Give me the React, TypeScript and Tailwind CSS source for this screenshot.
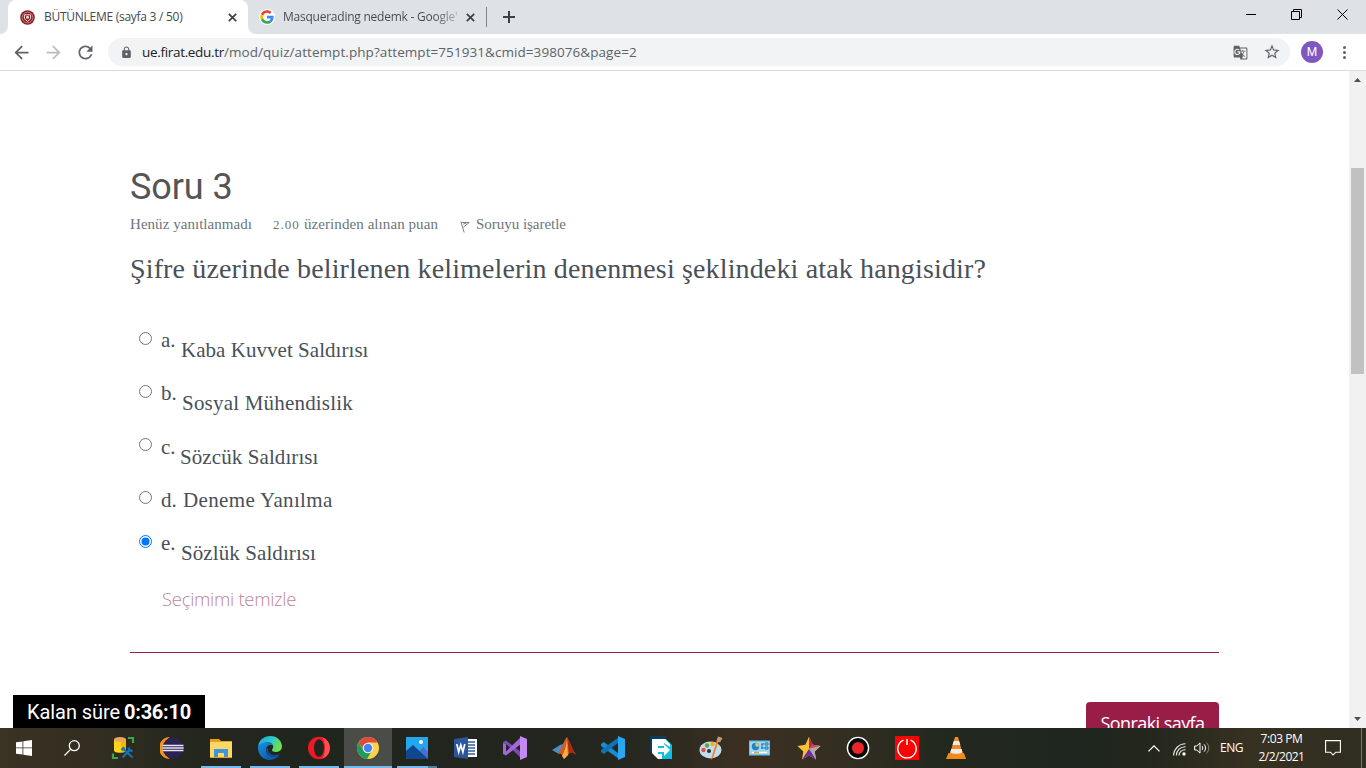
import React from "react";
import { MdArrowBack, MdArrowForward, MdRefresh, MdLock, MdGTranslate, MdStarBorder } from "react-icons/md";

const options = [
  { letter: "a.", text: "Kaba Kuvvet Saldırısı", row: "h-[53px]", letterBox: "w-[20px]", textBox: "pt-[10px] tracking-[0.04px]" },
  { letter: "b.", text: "Sosyal Mühendislik", row: "h-[53px]", letterBox: "w-[21px]", textBox: "pt-[10px] tracking-[0.198px]" },
  { letter: "c.", text: "Sözcük Saldırısı", row: "h-[53px]", letterBox: "w-[19px] pt-px", textBox: "pt-[11px] tracking-[0.09px]" },
  { letter: "d.", text: "Deneme Yanılma", row: "h-[44px]", letterBox: "w-[22px] pt-px", textBox: "pt-px tracking-[0.36px]" },
  { letter: "e.", text: "Sözlük Saldırısı", row: "h-[56px]", letterBox: "w-[20px]", textBox: "pt-[10px] tracking-[0.088px]", checked: true },
];

function Radio({ checked }: { checked?: boolean }) {
  return (
    <svg className="mt-1 ml-[9px] size-[13px] shrink-0" viewBox="0 0 13 13">
      <circle cx="6.5" cy="6.5" r="6" fill="#fff" stroke={checked ? "#0075ff" : "#767676"} />
      {checked && <circle cx="6.5" cy="6.5" r="4" fill="#0075ff" />}
    </svg>
  );
}

function CloseX() {
  return (
    <svg className="size-[9px] shrink-0" viewBox="0 0 9 9" stroke="#3c4043" strokeWidth="1.7">
      <path d="M.8.8l7.4 7.4M8.2.8L.8 8.2" />
    </svg>
  );
}

function UniversityIcon() {
  return (
    <svg className="size-[15px] shrink-0" viewBox="0 0 15 15" fill="none">
      <circle cx="7.5" cy="7.5" r="7.3" fill="#8c1d22" />
      <circle cx="7.5" cy="7.5" r="5.4" stroke="#d09a9a" strokeWidth=".8" />
      <path d="M4.400 4.800h6.200v4l-3.100 2.600-3.100-2.600z" stroke="#f0dcdc" />
      <circle cx="7.500" cy="7.300" r="1.500" fill="#f0dcdc" />
    </svg>
  );
}

function GoogleIcon() {
  return (
    <svg className="size-4 shrink-0" viewBox="0 0 48 48">
      <circle cx="24" cy="24" r="24" fill="#fff" />
      <g transform="translate(3.5 3.5) scale(.855)">
        <path fill="#EA4335" d="M24 9.5c3.5 0 6.7 1.2 9.2 3.6l6.8-6.8C35.9 2.400 30.500 0 24 0 14.600 0 6.500 5.400 2.600 13.200l8 6.200C12.400 13.700 17.700 9.500 24 9.500z" />
        <path fill="#4285F4" d="M47 24.500c0-1.600-.2-3.100-.4-4.500H24v9h12.900c-.6 3-2.300 5.500-4.800 7.200l7.700 6C44.400 38 47 31.800 47 24.500z" />
        <path fill="#FBBC05" d="M10.500 28.600c-.5-1.500-.8-3-.8-4.600s.3-3.100.8-4.600l-8-6.200C.9 16.500 0 20.100 0 24s.9 7.500 2.600 10.800z" />
        <path fill="#34A853" d="M24 48c6.500 0 11.900-2.100 15.900-5.800l-7.700-6c-2.200 1.500-4.900 2.300-8.200 2.300-6.300 0-11.600-4.200-13.500-9.900l-8 6.200C6.500 42.600 14.600 48 24 48z" />
      </g>
    </svg>
  );
}

function BrowserChrome() {
  return (
    <header className="h-[71px] font-['Open_Sans','Noto_Sans',sans-serif]">
      <div className="flex h-[34px] bg-[#dee1e6]">
        <div className="flex h-full w-2 items-end bg-white">
          <div className="h-full w-full rounded-br-lg bg-[#dee1e6]" />
        </div>
        <div className="flex w-[240px] items-center rounded-t-lg bg-white pl-3 pr-[11px]">
          <UniversityIcon />
          <span className="ml-[9px] flex-1 whitespace-nowrap text-[12px] tracking-[-0.268px] text-[#45494d]">BÜTÜNLEME (sayfa 3 / 50)</span>
          <CloseX />
        </div>
        <div className="w-2 bg-white">
          <div className="h-full rounded-bl-lg bg-[#dee1e6]" />
        </div>
        <div className="my-[7px] flex w-[231px] items-center border-r border-[#808387] pl-[3px] pr-[11px]">
          <GoogleIcon />
          <span className="ml-2 w-[176px] whitespace-nowrap bg-[linear-gradient(90deg,#45494d_150px,rgba(69,73,77,0.3)_174px)] bg-clip-text text-[12px] tracking-[-0.239px] text-transparent">Masquerading nedemk - Google'</span>
          <span className="ml-auto flex"><CloseX /></span>
        </div>
        <svg className="mt-[11px] ml-4 size-3" viewBox="0 0 12 12" stroke="#3c4043" strokeWidth="2"><path d="M6 0v12M0 6h12" /></svg>
        <div className="mr-[18px] ml-auto flex pt-[9px]">
          <svg className="h-[11px] w-[103px]" viewBox="0 0 103 11" fill="none" stroke="#000">
            <path d="M1 5.500h10M46.500 2.500h8v8h-8zM48.500 2.500v-2h8v8h-2" />
            <path d="M92.500.5l10 10M102.500.5l-10 10" />
          </svg>
        </div>
      </div>
      <div className="flex h-[37px] items-center border-b border-[#dadce0] bg-white pl-[11px] text-[#5f6368]">
        <MdArrowBack size={21} />
        <MdArrowForward size={21} className="ml-[11px] text-[#bbbdbf]" />
        <MdRefresh size={21} className="ml-[11px]" />
        <div className="ml-3 flex h-7 w-[1182px] items-center rounded-full bg-[#f1f3f4] pl-3">
          <MdLock size={13} />
          <span className="ml-[9px] flex items-center whitespace-nowrap text-[13.5px]">
            <span className="tracking-[-0.32px] text-[#202124]">ue.firat.edu.tr</span>
            <span className="tracking-[0.065px]">/mod/quiz/attempt.php?attempt=751931&amp;cmid=398076&amp;page=2</span>
          </span>
          <MdGTranslate size={15} className="ml-auto" />
          <MdStarBorder size={18} className="mr-[9px] ml-[15px]" />
        </div>
        <div className="ml-[11px] flex size-[22px] items-center justify-center rounded-full bg-[#7e57c2] font-[Roboto] text-[12px] text-white">M</div>
        <svg className="ml-5 h-[13px] w-[3px]" viewBox="0 0 3 13" fill="#5f6368"><circle cx="1.500" cy="1.500" r="1.500" /><circle cx="1.500" cy="6.500" r="1.500" /><circle cx="1.500" cy="11.500" r="1.500" /></svg>
      </div>
    </header>
  );
}

function Quiz() {
  return (
    <main className="flex flex-1 flex-col px-[130px] pt-[94px] font-['Liberation_Serif',serif] text-[#495057]">
      <h1 className="font-[Roboto] text-[36px] leading-[44px] tracking-[-0.1px] text-[#555]">Soru 3</h1>
      <div className="mt-[5px] flex h-5 items-center whitespace-nowrap text-[15px] leading-5 text-[#6c757d]">
        <span className="w-[143px] tracking-[0.043px]">Henüz yanıtlanmadı</span>
        <span className="flex w-[187px] items-baseline">
          <span className="w-[31px] text-[13px] tracking-[1px]">2.00</span>
          <span className="tracking-[0.074px]">üzerinden alınan puan</span>
        </span>
        <svg className="mt-[5px] mr-[6px] h-3 w-[10px]" viewBox="0 0 10 12" fill="none" stroke="#6c757d" strokeWidth=".9">
          <path d="M.8.600L4.200 11.500M1.200 1.500h8L3.300 6.200M3.200 3.200l4-1.700" />
        </svg>
        <span className="tracking-[-0.027px]">Soruyu işaretle</span>
      </div>
      <p className="mt-[17px] h-9 whitespace-nowrap text-[28px] leading-9 tracking-[0.145px]">
        Şifre üzerinde belirlenen kelimelerin denenmesi şeklindeki atak hangisidir?
      </p>
      <div className="mt-[41px] whitespace-nowrap text-[21px] leading-6">
        {options.map((o) => (
          <div key={o.letter} className={`flex items-start ${o.row}`}>
            <Radio checked={o.checked} />
            <span className={`ml-[9px] shrink-0 ${o.letterBox}`}>{o.letter}</span>
            <span className={o.textBox}>{o.text}</span>
          </div>
        ))}
      </div>
      <a className="ml-8 h-6 whitespace-nowrap font-['Open_Sans','Noto_Sans',sans-serif] text-[18.5px] leading-6 font-light tracking-[-0.3px] text-[#bd8598]">Seçimimi temizle</a>
      <div className="mt-[41px] h-px shrink-0 bg-[#9b1c46]" />
      <div className="mt-[49px] flex h-[26px] justify-end overflow-hidden">
        <button className="h-[42px] w-[133px] whitespace-nowrap rounded-[4px] bg-[#981d47] font-['Open_Sans','Noto_Sans',sans-serif] text-[18px] leading-[42px] tracking-[-0.57px] text-white">Sonraki sayfa</button>
      </div>
    </main>
  );
}

function ScrollBar() {
  return (
    <div className="flex w-[17px] flex-col items-center bg-[#f1f1f1]">
      <svg className="mt-[7px] h-1 w-[7px]" viewBox="0 0 7 4" fill="#505050"><path d="M0 4L3.500 0L7 4z" /></svg>
      <div className="mt-[86px] mr-px h-[206px] w-[13px] bg-[#c1c1c1]" />
      <svg className="mt-auto mb-[7px] h-1 w-[7px]" viewBox="0 0 7 4" fill="#505050"><path d="M0 0h7L3.500 4z" /></svg>
    </div>
  );
}

const icons: React.ReactNode[] = [
  <>
    <path d="M3 3.500v11c0 3 12 3 12 0v-11z" fill="#ffd51c" />
    <path d="M10 4h5v12h-5z" fill="#f3b900" />
    <ellipse cx="9" cy="3.500" rx="6" ry="2.500" fill="#e9a561" />
    <path d="M17 2h5v5M2 17.500V22h5" stroke="#41a34a" strokeWidth="2.200" fill="none" />
    <path d="M11.500 21.500L19 13.500M13 13.500l8.500 8M10.500 14l3-2.500M17.500 11.500l1 3 3 .5" stroke="#1173b8" strokeWidth="2.300" fill="none" />
  </>,
  <>
    <path d="M10 1a11 11 0 0 0 0 22A13 13 0 0 1 10 1z" fill="#f7941e" />
    <circle cx="13" cy="12" r="10.500" fill="#2c2255" />
    <path d="M2.500 9.500h21M2.300 12h21.400M2.500 14.500h21" stroke="#e8e6f2" strokeWidth="1.500" />
  </>,
  <>
    <path d="M1 3h9l2 2h11v17H1z" fill="#e7a118" />
    <path d="M1 6h22v15H1z" fill="#ffd766" />
    <path d="M5 21v-8h14v8h-4v-4H9v4z" fill="#3b96dd" />
  </>,
  <>
    <defs>
      <linearGradient id="edgeTop" x2="1" y2=".4"><stop stopColor="#1ba6df" /><stop offset=".55" stopColor="#2cc7d0" /><stop offset="1" stopColor="#6ee04c" /></linearGradient>
      <linearGradient id="edgeLow" x2=".8" y2="1"><stop stopColor="#1b8fe0" /><stop offset="1" stopColor="#0b54a8" /></linearGradient>
    </defs>
    <path d="M0 12C0 4 6 0 12.500 0 19 0 24 5 24 10.500c0 4-3.500 5.500-6 5.500-2.800 0-4-1-4-2 0-1 1.200-1.300 1.200-3.200 0-2.300-2-4.300-5.200-4.300C5 6.500 0 9 0 12z" fill="url(#edgeTop)" />
    <path d="M0 12c0-4 4.500-5.500 8.500-5.500 3 0 5.500 1 6.500 3-4-1.500-7 1-7 4.500 0 4 3.500 7 8 7 2.500 0 4.500-1 5.500-1.700C19.500 22 16 24 12 24 5 24 0 18.500 0 12z" fill="url(#edgeLow)" />
    <path d="M8 14c0 4.500 4 7 8 7 3 0 5.500-1.700 6-3-7 2.500-13 0-12-6.500C8.700 12 8 13 8 14z" fill="#124d91" />
  </>,
  <>
    <ellipse cx="12" cy="12" rx="11" ry="11.200" fill="#ee1827" />
    <path d="M15 1.300A11.200 11.200 0 0 1 15 22.700C19 19 19 5 15 1.300z" fill="#ff5055" />
    <ellipse cx="12" cy="12" rx="5" ry="8.800" fill="#20251e" />
  </>,
  <>
    <circle cx="12" cy="12" r="11" fill="#fdd149" />
    <path d="M2.500 6.500A11 11 0 0 1 21.500 6.500H12L8 14z" fill="#df4a3c" />
    <path d="M2.500 6.500A11 11 0 0 0 11 23l5-8.500H8z" fill="#209b58" />
    <circle cx="12" cy="12" r="5.300" fill="#f4f4f4" />
    <circle cx="12" cy="12" r="4.200" fill="#4384ef" />
  </>,
  <>
    <path d="M1 1h22v22H1z" fill="#24a7f0" />
    <path d="M12 18l6-7 5 5v7H9z" fill="#4b6ed0" />
    <path d="M1 15L8 9l15 14H1z" fill="#10478d" />
    <circle cx="16" cy="6" r="2" fill="#fff" />
  </>,
  <>
    <path d="M10 3h13v18H10z" fill="#fff" />
    <path d="M14 6h7M14 9h7M14 12h7M14 15h7M14 18h7" stroke="#345ca0" strokeWidth="1.300" />
    <path d="M0 3L14 1v22L0 21z" fill="#2b579a" />
    <path d="M2.800 8l1.900 8 2.100-7 2.100 7 1.900-8" fill="none" stroke="#fff" strokeWidth="1.700" />
  </>,
  <>
    <path d="M0 6l3-1.500L18 16v6L3 8v9L0 18z" fill="#7d4ab5" />
    <path d="M0 18l3 1.500L18 8V1L3 15.500V8H0z" fill="#a565dc" />
    <path d="M17 0l7 3v18l-7 3z" fill="#c38af1" />
  </>,
  <>
    <path d="M0 14l8-5 3-1 3-6-3 13-4 3z" fill="#4b8fc2" />
    <path d="M5 17c4-1 6-10 10-16 3 5 5 12 9 18-4-4-6-3-8 0l-4 4c-1-4-3-6-7-6z" fill="#d95a1d" />
    <path d="M15 1c0 7-2 14-5 19l2 3 4-4c-1-5 0-11-1-18z" fill="#f7b143" />
    <path d="M15 1c3 5 5 12 9 18-3-3-5-3-7-1z" fill="#a92d16" />
  </>,
  <>
    <path d="M0 8l3-2 15 12v5L0 10z" fill="#1a8cd6" />
    <path d="M0 16l3 2L18 6V1L0 14z" fill="#1172b7" />
    <path d="M17 0l7 3v18l-7 3z" fill="#29a7f2" />
  </>,
  <>
    <path d="M0 0h16v4H4v12H0z" fill="#0b3c62" />
    <path d="M3 3h13l6 6v14H9l-6-6z" fill="#12bfdf" />
    <path d="M2 3h13l5 5v3l-6-4v3H8v8h4v5H8l-6-6z" fill="#fff" />
    <path d="M7 12h7V8l6 6-6 6v-4H7z" fill="#fff" />
  </>,
  <>
    <ellipse cx="11.500" cy="14" rx="11" ry="8.500" fill="#c3dceb" />
    <circle cx="4.500" cy="14" r="2.200" fill="#d85147" />
    <circle cx="8" cy="9.500" r="2.200" fill="#55a93f" />
    <circle cx="13.500" cy="8" r="2.200" fill="#f2ad28" />
    <circle cx="10" cy="15" r="2" fill="#25303b" />
    <path d="M20 4l-6 18-2 2 1-4L18 4z" fill="#e98528" />
    <path d="M17.500 5l1.500-4.500 4.500 1.500-2.500 4.500z" fill="#c79c74" />
  </>,
  <>
    <path d="M1 4.500h21v15H1z" fill="#6bc3ef" />
    <path d="M2 6h19v12H2z" fill="#99daf7" />
    <circle cx="7.500" cy="10.500" r="3.700" fill="#2582c5" />
    <path d="M7.500 10.500V7A3.500 3.500 0 0 1 11 10.500z" fill="#f6c66b" />
    <path d="M13 8h3m1-1h3v2h-3zM13 12h3m1-1h3v2h-3zM14 8v5" fill="none" stroke="#286fa5" />
    <path d="M4 16.500h15" stroke="#fff" strokeWidth="1.300" /><path d="M6 16.500h5" stroke="#f39b25" strokeWidth="1.500" />
  </>,
  <>
    <path d="M12 .8l3.700 8L23.500 10l-5.800 5.500L19 23.500l-7-4-7 4 1.300-8L.5 10l7.800-1.200z" fill="#f7c531" />
    <path d="M12 .8l3.700 8L12 13z" fill="#bb2360" />
    <path d="M15.700 8.800L23.500 10 12 13z" fill="#d13d70" />
    <path d="M12 13l11.500-3-5.800 5.500L19 23.500z" fill="#aaa9ae" />
    <path d="M12 13l7 10.500-7-4-7 4z" fill="#6b2aa7" />
  </>,
  <>
    <circle cx="12" cy="12" r="10.600" fill="#050505" stroke="#fff" strokeWidth="1.400" />
    <circle cx="12" cy="12" r="6" fill="#ed2428" />
  </>,
  <>
    <path d="M0 0h24v24H0z" fill="#fb0203" />
    <path d="M8.500 4.200a9.200 9.200 0 1 0 7 0" fill="none" stroke="#fff" strokeWidth="1.400" />
    <path d="M12 3v6" stroke="#fff" strokeWidth="1.500" />
  </>,
  <>
    <path d="M4.500 17h15.500l2 6H2z" fill="#f58a13" />
    <path d="M11 1h3l5 18c-3 2-10.500 2-13.500 0z" fill="#f48a1c" />
    <path d="M9.800 5h5.300l1.200 4H8.500zM7.300 13h10.300l1 3.500c-3 1.700-9.500 1.700-12.400 0z" fill="#ececec" />
  </>,
];

const slotLines: Record<number, string> = {
  2: "w-10 bg-[#76b9ed]",
  3: "w-10 bg-[#76b9ed]",
  4: "w-10 bg-[#76b9ed]",
  5: "w-12 bg-[#76b9ed]",
  6: "w-10 bg-[linear-gradient(90deg,#76b9ed_31px,#4f7fa4_31px)]",
};

function TaskBar() {
  return (
    <footer className="flex h-10 bg-[linear-gradient(90deg,#3a3223_0px,#332e21_90px,#25281f_180px,#20251e_300px,#22261e_560px,#272820_640px,#3b2f22_740px,#352f21_830px,#24291f_930px,#1e261f_1070px,#22261d_1140px,#373121_1250px,#302e21_1366px)] text-white">
      <div className="flex w-12 items-center justify-center">
        <svg className="size-4" viewBox="0 0 16 16" fill="#fff"><path d="M0 2.300l6.500-.9v6.100H0zM7.300 1.300L16 0v7.500H7.300zM0 8.300h6.500v6.300L0 13.700zM7.300 8.300H16V16l-8.700-1.200z" /></svg>
      </div>
      <div className="flex w-[51px] items-center pl-4">
        <svg className="size-4" viewBox="0 0 16 16" fill="none" stroke="#fff" strokeWidth="1.300"><circle cx="10.300" cy="5.700" r="5" /><path d="M6.600 9.400L.5 15.500" /></svg>
      </div>
      {icons.map((icon, i) => (
        <div key={i} className={`mr-px flex w-12 shrink-0 flex-col items-center pt-2 ${i === 5 ? "bg-[#4a4d47]" : ""}`}>
          <svg className="size-6 shrink-0" viewBox="0 0 24 24">{icon}</svg>
          <div className={`mt-auto h-[2px] ${slotLines[i] ?? "w-0"}`} />
        </div>
      ))}
      <div className="ml-auto flex items-center font-['Open_Sans','Noto_Sans',sans-serif] text-[12px] whitespace-nowrap">
        <svg className="h-[7px] w-3" viewBox="0 0 12 7" fill="none" stroke="#fff" strokeWidth="1.300"><path d="M.5 6.400L6 .9l5.500 5.500" /></svg>
        <svg className="mt-[2px] ml-[13px] size-[13px]" viewBox="0 0 13 13" fill="none" stroke="#eee" strokeWidth="1.100">
          <path d="M.6 12.500A12 12 0 0 1 12.500.8M3.300 12.500a9 9 0 0 1 9.200-8.800M6 12.500a6 6 0 0 1 6.500-5.800" /><circle cx="11" cy="11" r="1.700" fill="#fff" stroke="none" />
        </svg>
        <svg className="ml-2 h-3 w-4" viewBox="0 0 16 12" fill="none" stroke="#fff"><path d="M.6 4h2.200L6 .900v10.200L2.800 8H.6z" /><path d="M8 4c1 1 1 3 0 4M10 2.300c2 2 2 5.400 0 7.400" /><path d="M12.500.7c3 3 3 7.600 0 10.600" stroke="#8b8b83" /></svg>
        <span className="ml-[10px] w-[23px] tracking-[-0.479px]">ENG</span>
        <div className="ml-[15px] flex w-[47px] flex-col items-center leading-[18px]">
          <span className="tracking-[-0.411px]">7:03 PM</span>
          <span className="tracking-[-0.496px]">2/2/2021</span>
        </div>
        <svg className="ml-[20px] h-4 w-4" viewBox="0 0 16 16" fill="none" stroke="#fff" strokeWidth="1.100"><path d="M.6.600h14.800v11.600h-4.600L8 15l-2.500-2.800H.6z" /></svg>
        <div className="ml-[20px] h-10 w-px bg-[#77756c]" />
        <div className="w-1" />
      </div>
    </footer>
  );
}

export default function App() {
  return (
    <div className="flex h-[768px] w-[1366px] flex-col overflow-hidden bg-white">
      <BrowserChrome />
      <div className="relative flex h-[657px]">
        <Quiz />
        <ScrollBar />
        <div className="absolute bottom-0 left-[13px] flex h-[33px] w-48 items-center bg-black pl-[14px] font-[Roboto] text-[20px] whitespace-nowrap text-white">
          <span className="w-[97px] tracking-[-0.073px]">Kalan süre</span>
          <strong className="font-bold tracking-[-0.237px]">0:36:10</strong>
        </div>
      </div>
      <TaskBar />
    </div>
  );
}
